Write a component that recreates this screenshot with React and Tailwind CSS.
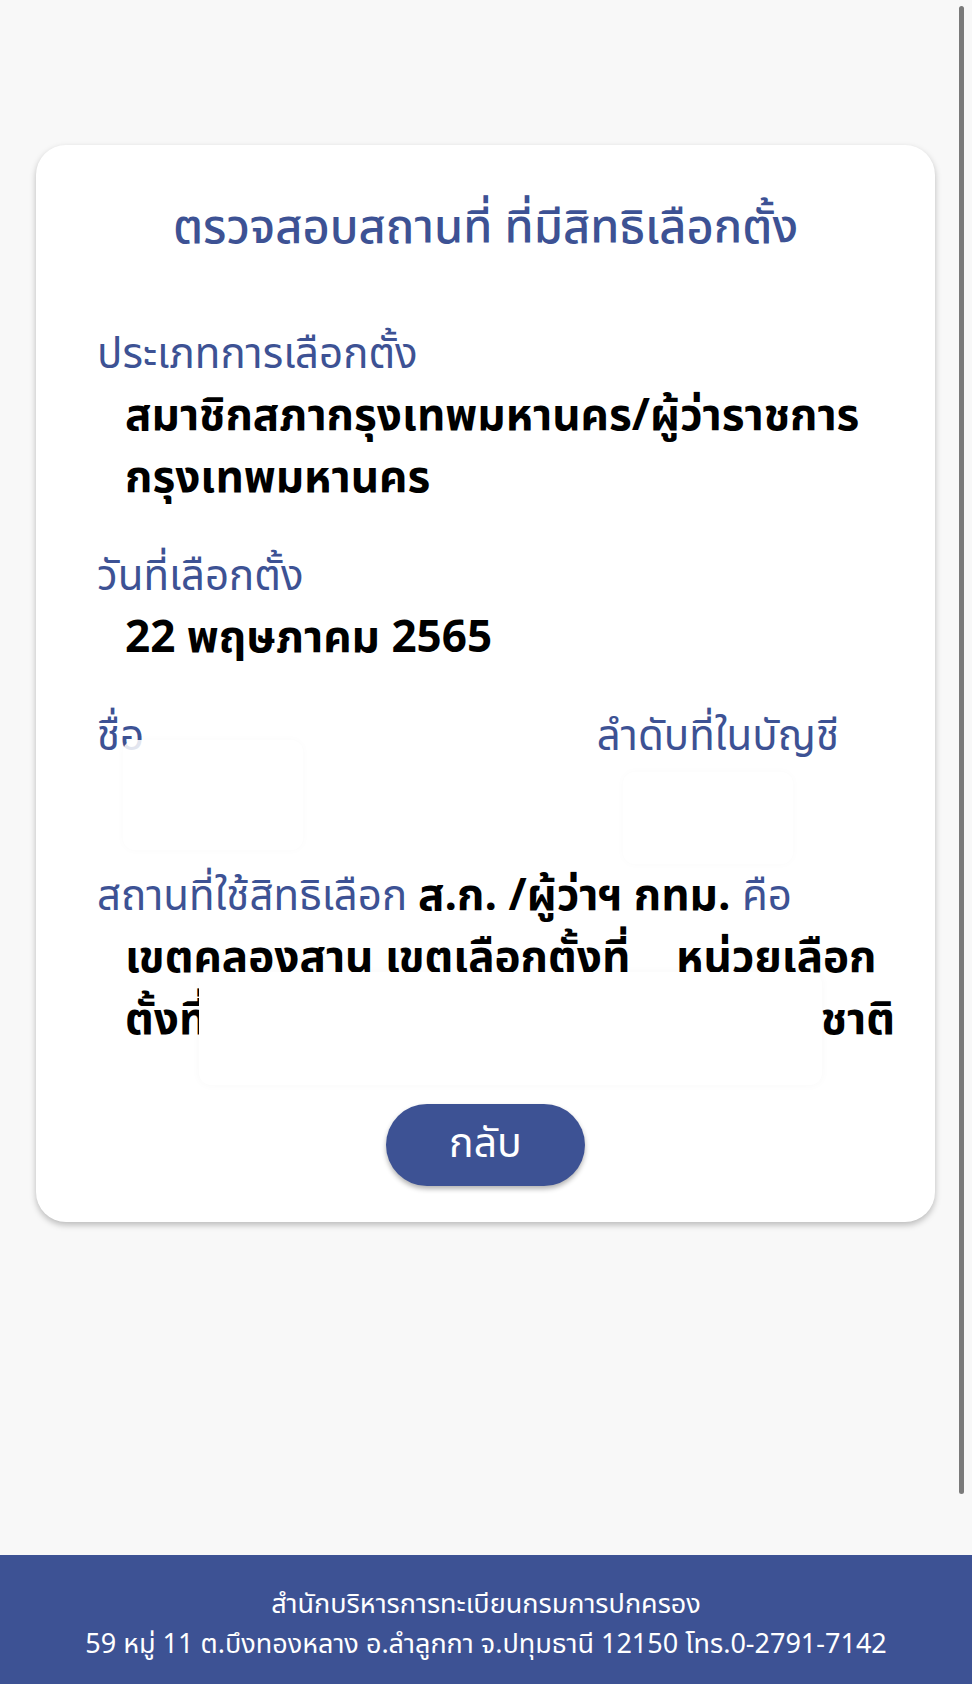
import React from "react";

const FONT = { fontFamily: '"Noto Sans Thai", "Noto Sans Thai UI", "Noto Sans", "DejaVu Sans", sans-serif' };

function Label({ children, className = "" }) {
  return <div className={"text-[42px] leading-[62px] text-[#3d5294] whitespace-nowrap " + className}>{children}</div>;
}

function Value({ children, className = "" }) {
  return <div className={"pl-[28px] text-[44px] leading-[62px] font-bold text-black whitespace-nowrap " + className}>{children}</div>;
}

export default function App() {
  return (
    <div style={FONT} className="relative w-[972px] h-[1684px] bg-[#f8f8f8] flex flex-col overflow-hidden">
      {/* scrollbar indicator */}
      <div className="absolute right-[8px] top-[6px] w-[5px] h-[1488px] rounded-full bg-[#7a7a7a]" />

      <main className="flex-1 pt-[145px] pl-[36px] pr-[37px]">
        <div className="bg-white rounded-[30px] shadow-[0_3px_6px_rgba(0,0,0,0.25)] pt-[53px] pb-[36px] px-[61px]">
          <h1 className="text-center text-[47px] leading-[62px] font-medium text-[#3d5294] whitespace-nowrap">
            ตรวจสอบสถานที่ ที่มีสิทธิเลือกตั้ง
          </h1>

          <div className="mt-[64px] flex flex-col gap-[36px]">
            <section>
              <Label>ประเภทการเลือกตั้ง</Label>
              <Value>สมาชิกสภากรุงเทพมหานคร/ผู้ว่าราชการ<br />กรุงเทพมหานคร</Value>
            </section>

            <section>
              <Label>วันที่เลือกตั้ง</Label>
              <Value>22 พฤษภาคม 2565</Value>
            </section>

            <section className="relative">
              <div className="flex justify-between pr-[35px]">
                <Label>ชื่อ</Label>
                <Label>ลำดับที่ในบัญชี</Label>
              </div>
              <div className="h-[62px]" />
              <div className="absolute left-[26px] top-[34px] w-[180px] h-[110px] rounded-[12px] bg-white/85 shadow-[0_0_8px_rgba(0,0,0,0.025)]" />
              <div className="absolute left-[526px] top-[66px] w-[170px] h-[92px] rounded-[12px] bg-white/90 shadow-[0_0_8px_rgba(0,0,0,0.025)]" />
            </section>

            <section className="relative">
              <div className="text-[42px] leading-[62px] whitespace-nowrap">
                <span className="text-[#3d5294]">สถานที่ใช้สิทธิเลือก </span>
                <span className="font-bold text-black text-[44px]">ส.ก. /ผู้ว่าฯ กทม. </span>
                <span className="text-[#3d5294]">คือ</span>
              </div>
              <Value>เขตคลองสาน เขตเลือกตั้งที่ &nbsp;&nbsp; หน่วยเลือก</Value>
              <Value className="flex justify-between w-[798px]">
                <span>ตั้งที่</span>
                <span>ชาติ</span>
              </Value>
              <div className="absolute left-[102px] top-[106px] w-[623px] h-[113px] rounded-[12px] bg-white shadow-[0_0_10px_rgba(0,0,0,0.03)]" />
            </section>
          </div>

          <div className="mt-[52px] flex justify-center">
            <button className="w-[199px] h-[82px] rounded-full bg-[#3d5294] text-white text-[41px] shadow-[0_3px_5px_rgba(0,0,0,0.3)]">
              กลับ
            </button>
          </div>
        </div>
      </main>

      <footer className="h-[129px] bg-[#3d5294] text-white text-center text-[27px] leading-[40px] pt-[30px] whitespace-nowrap">
        <div>สำนักบริหารการทะเบียนกรมการปกครอง</div>
        <div>59 หมู่ 11 ต.บึงทองหลาง อ.ลำลูกกา จ.ปทุมธานี 12150 โทร.0-2791-7142</div>
      </footer>
    </div>
  );
}
